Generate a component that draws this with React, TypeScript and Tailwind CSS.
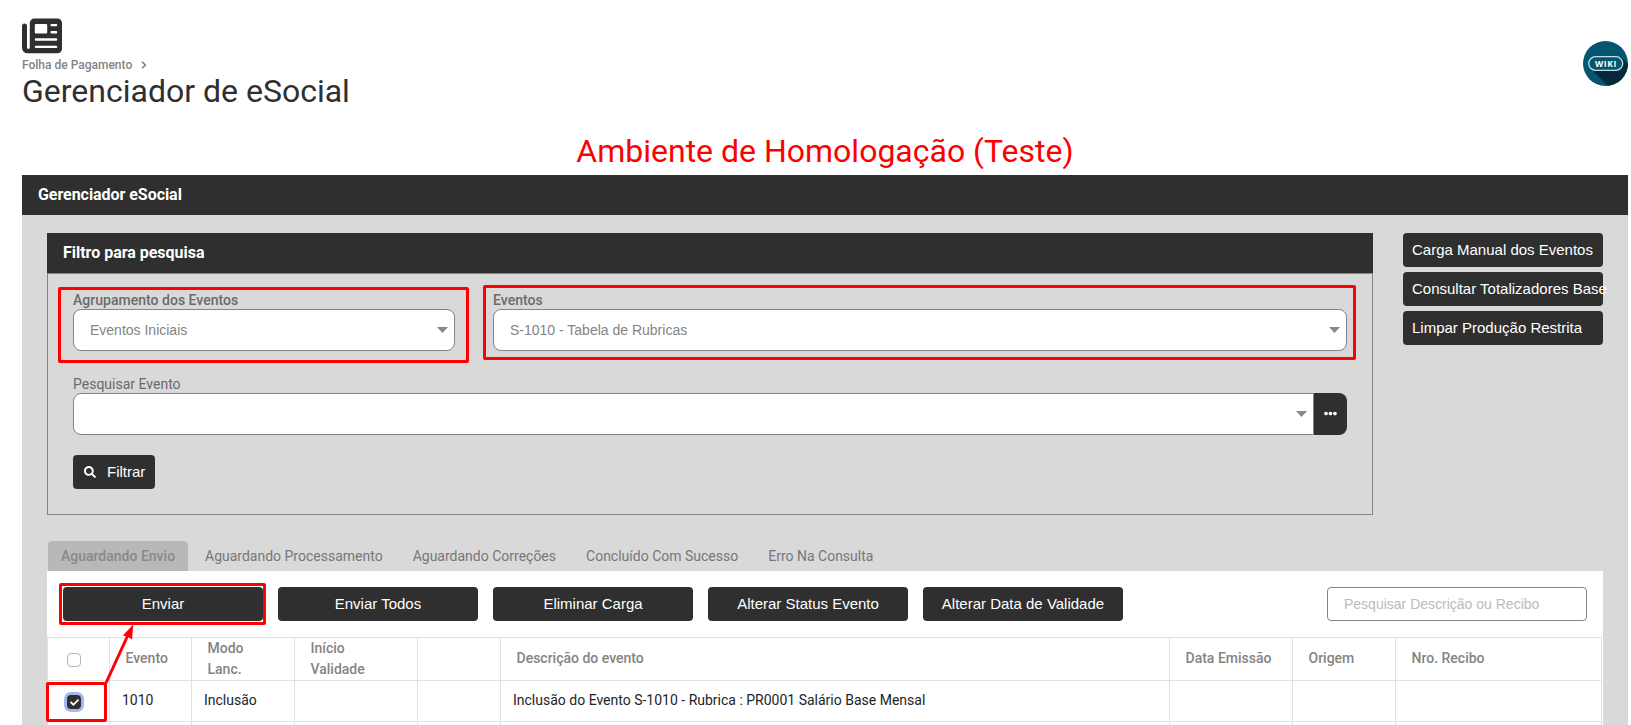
import { FaCheck, FaEllipsisH, FaSearch } from 'react-icons/fa'

const sideActions = ['Carga Manual dos Eventos', 'Consultar Totalizadores Base', 'Limpar Produção Restrita']

const tabs = ['Aguardando Processamento', 'Aguardando Correções', 'Concluído Com Sucesso', 'Erro Na Consulta']

const actions = ['Enviar', 'Enviar Todos', 'Eliminar Carga', 'Alterar Status Evento', 'Alterar Data de Validade']

const sans = "font-['Liberation_Sans',sans-serif]"

function NewspaperIcon() {
    return (
        <svg width="40" height="36" viewBox="0 0 40 36" fill="#2f2f2f">
            <path d="M12.5 0.4H35.5A4.5 4.5 0 0 1 40 4.9V30.8A4.5 4.5 0 0 1 35.5 35.3H5.5A5.5 5.5 0 0 1 0 29.8V8A2.4 2.4 0 0 1 5 8V29.5A1.3 1.3 0 0 0 7.8 29.5V4.9A4.5 4.5 0 0 1 12.5 0.4z" />
            <g fill="#fff">
                <rect x="12.8" y="6" width="12.4" height="9.5" rx="1" />
                <rect x="28.5" y="6" width="6.7" height="2.2" rx="1" />
                <rect x="28.5" y="13" width="6.7" height="2.4" rx="1" />
                <rect x="12.8" y="20.3" width="22.4" height="2.4" rx="1" />
                <rect x="12.8" y="27.7" width="22.4" height="2.4" rx="1" />
            </g>
        </svg>
    )
}

function Caret() {
    return (
        <svg width="11" height="6" viewBox="0 0 11 6" className="shrink-0">
            <path d="M0 0h11L5.5 6z" fill="#888" />
        </svg>
    )
}

function Select({ label, value, className }: { label: string; value: string; className: string }) {
    return (
        <div className={className}>
            <div className="h-[18px] text-[14px] leading-[18px] font-medium tracking-[0.02px] text-[#6a6a6a]">{label}</div>
            <div className={`flex h-[42px] items-center justify-between rounded-lg border border-[#848484] bg-white pr-[6px] pl-4 text-[14px] text-[#848484] ${sans}`}>
                {value}
                <Caret />
            </div>
        </div>
    )
}

function WikiBadge() {
    return (
        <svg width="45" height="45" viewBox="0 0 45 45">
            <defs>
                <clipPath id="disc">
                    <circle cx="22.5" cy="22.5" r="22.5" />
                </clipPath>
            </defs>
            <g clipPath="url(#disc)">
                <rect width="45" height="45" fill="#035670" />
                <path d="M8 28L38 16L56 34V56H36z" fill="#03293b" />
            </g>
            <rect x="5.7" y="15.7" width="34" height="13.6" rx="6.8" fill="#035670" stroke="#c9dbe0" strokeWidth="1.3" />
            <text x="23" y="25.6" textAnchor="middle" fontSize="8.5" fontWeight="700" letterSpacing="0.6" fill="#fff" fontFamily="Open Sans, sans-serif">WIKI</text>
        </svg>
    )
}

// Red outlines and the arrow that mark the steps of the guide
function Marks() {
    return (
        <>
            <div className="absolute top-[287px] left-[58px] h-[76px] w-[411px] rounded-[2px] border-3 border-[#f00]" />
            <div className="absolute top-[285px] left-[483px] h-[75px] w-[873px] rounded-[2px] border-3 border-[#f00]" />
            <div className="absolute top-[583px] left-[59px] h-[42px] w-[207px] rounded-[2px] border-3 border-[#f00]" />
            <div className="absolute top-[682px] left-[46px] h-[40px] w-[61px] rounded-[2px] border-3 border-[#f00]" />
            <svg className="absolute top-[620px] left-[100px]" width="40" height="70" viewBox="0 0 40 70">
                <path d="M6 63L28 15" stroke="#f00" strokeWidth="3" />
                <path d="M33.3 4.5L32 19.4L27.6 16.4L22.8 15.4z" fill="#f00" />
            </svg>
        </>
    )
}

export default function App() {
    return (
        <div className="relative h-[725px] w-[1631px] overflow-hidden bg-white font-['Roboto',sans-serif]">
            <header className="flex h-[134px] justify-between pr-[3px] pl-[22px]">
                <div className="pt-[18px]">
                    <NewspaperIcon />
                    <div className="mt-[3px] flex h-4 items-center text-[12px] font-medium text-[#848484]">
                        Folha de Pagamento
                        <svg width="6" height="8" viewBox="0 0 6 8" className="ml-[9px]">
                            <path d="M1 0.7L4.4 4L1 7.3" fill="none" stroke="#777" strokeWidth="1.4" />
                        </svg>
                    </div>
                    <h1 className="text-[32px] leading-[36px] text-[#2f2f2f]">Gerenciador de eSocial</h1>
                </div>
                <div className="pt-[41px]">
                    <WikiBadge />
                </div>
            </header>

            <div className="h-[41px] pl-[19px] text-center text-[32px] leading-[35px] text-[#f00]">Ambiente de Homologação (Teste)</div>

            <main className="mr-[3px] ml-[22px] bg-[#d9d9d9]">
                <div className="h-10 bg-[#2f2f2f] pl-4 text-[16px] leading-[39px] font-bold tracking-[-0.05px] text-white">Gerenciador eSocial</div>

                <div className="flex justify-between pt-[18px] pr-[25px] pl-[25px]">
                    <section className="h-[282px] w-[1326px] border border-[#848484]">
                        <div className="-mx-px -mt-px h-10 bg-[#2f2f2f] pl-4 text-[16px] leading-[39px] font-bold tracking-[-0.02px] text-white">Filtro para pesquisa</div>
                        <div className="border-t border-[#848484] px-[25px] pt-[17px]">
                            <div className="flex gap-[38px]">
                                <Select label="Agrupamento dos Eventos" value="Eventos Iniciais" className="w-[382px]" />
                                <Select label="Eventos" value="S-1010 - Tabela de Rubricas" className="w-[854px]" />
                            </div>
                            <div className="mt-6 h-[18px] text-[14px] leading-[18px] text-[#6a6a6a]">Pesquisar Evento</div>
                            <div className="flex h-[42px]">
                                <div className="flex flex-1 items-center justify-end rounded-l-lg border border-[#848484] bg-white pr-[6px]">
                                    <Caret />
                                </div>
                                <div className="flex w-[33px] items-center justify-center rounded-r-lg bg-[#2f2f2f] pb-px text-white">
                                    <FaEllipsisH size={13} />
                                </div>
                            </div>
                            <button className={`mt-5 flex h-[34px] w-[82px] items-center rounded bg-[#2f2f2f] pl-[11px] text-[15px] text-white ${sans}`}>
                                <FaSearch size={12} className="mr-[11px]" />
                                Filtrar
                            </button>
                        </div>
                    </section>

                    <div className="flex flex-col gap-[5px]">
                        {sideActions.map((label) => (
                            <button key={label} className={`h-[34px] w-[200px] rounded bg-[#2f2f2f] pl-[9px] text-left text-[15px] whitespace-nowrap text-white ${sans}`}>
                                {label}
                            </button>
                        ))}
                    </div>
                </div>

                <div className="mt-[26px] flex h-[30px] pl-[26px] text-[14px] leading-[30px] text-[#777]">
                    <div className="mr-[17px] w-[140px] rounded-t bg-[#b8b8b8] pl-[13px] font-medium text-[#888]">Aguardando Envio</div>
                    <div className="flex gap-[30px]">
                        {tabs.map((tab) => (
                            <div key={tab}>{tab}</div>
                        ))}
                    </div>
                </div>

                <section className="mx-[25px] h-[154px] overflow-hidden bg-white">
                    <div className="flex h-[66px] items-start gap-[15px] pt-4 pr-4 pl-4">
                        {actions.map((label) => (
                            <button key={label} className={`h-[34px] w-[200px] rounded bg-[#2f2f2f] text-[15px] text-white ${sans}`}>
                                {label}
                            </button>
                        ))}
                        <div className={`ml-auto h-[34px] w-[260px] rounded border border-[#848484] pl-4 text-[14px] leading-[32px] text-[#bbb] ${sans}`}>
                            Pesquisar Descrição ou Recibo
                        </div>
                    </div>

                    <table className="w-[1555px] table-fixed border-collapse text-left text-[14px] leading-[21px] [&_td]:border [&_td]:border-[#dee2e6] [&_td]:px-3 [&_td]:pt-0 [&_td]:pb-px [&_th]:border [&_th]:border-[#dee2e6] [&_th]:pt-0 [&_th]:pr-0 [&_th]:pb-[2px] [&_th]:pl-[15.5px]">
                        <colgroup>
                            <col className="w-[62px]" />
                            <col className="w-[82px]" />
                            <col className="w-[103px]" />
                            <col className="w-[123px]" />
                            <col className="w-[83px]" />
                            <col className="w-[669px]" />
                            <col className="w-[123px]" />
                            <col className="w-[103px]" />
                            <col />
                        </colgroup>
                        <thead className="text-[#848484] [&_th]:font-medium">
                            <tr className="h-[43px]">
                                <th>
                                    <div className="mt-[3px] ml-[3.5px] size-[14px] rounded-[4px] border border-[#adb5bd]" />
                                </th>
                                <th>Evento</th>
                                <th className="pb-0!">Modo<br />Lanc.</th>
                                <th className="pb-0!">Início<br />Validade</th>
                                <th />
                                <th>Descrição do evento</th>
                                <th>Data Emissão</th>
                                <th>Origem</th>
                                <th>Nro. Recibo</th>
                            </tr>
                        </thead>
                        <tbody className="text-[#212529]">
                            <tr className="h-[41px]">
                                <td>
                                    <div className="mt-[3px] ml-[7px] flex size-[14px] items-center justify-center rounded-[4px] bg-[#2f2f2f] text-white ring-3 ring-[#a3b8ee]">
                                        <FaCheck size={9} />
                                    </div>
                                </td>
                                <td>1010</td>
                                <td>Inclusão</td>
                                <td />
                                <td />
                                <td>Inclusão do Evento S-1010 - Rubrica : PR0001 Salário Base Mensal</td>
                                <td />
                                <td />
                                <td />
                            </tr>
                            <tr className="h-[41px]">
                                {Array.from({ length: 9 }, (_, i) => (
                                    <td key={i} />
                                ))}
                            </tr>
                        </tbody>
                    </table>
                </section>
            </main>

            <Marks />
        </div>
    )
}
